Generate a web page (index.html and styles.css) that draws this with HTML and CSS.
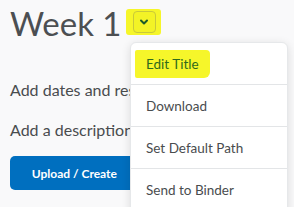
FILE: index.html
```html
<!DOCTYPE html>
<html lang="en">
  <head>
    <meta charset="UTF-8" />
    <title>Week 1</title>
    <link rel="stylesheet" href="styles.css">
  </head>
  <body>
    <div class="unit-page">
      <div class="title-row">
        <h1 class="unit-title">Week 1</h1>
        <span class="marker marker-trigger">
          <button class="context-trigger" aria-label="Actions">
            <svg width="10" height="8" viewBox="0 0 10 8">
              <polyline points="2,2.5 5,5.5 8,2.5" fill="none" stroke="#1c5a2a" stroke-width="2" stroke-linecap="round" stroke-linejoin="round" />
            </svg>
          </button>
        </span>
      </div>

      <p class="add-line">Add dates and restrictions...</p>
      <p class="add-line">Add a description...</p>

      <div class="actions">
        <button class="btn btn-primary">Upload / Create</button>
        <button class="btn btn-secondary">Existing Activities</button>
      </div>

      <ul class="context-menu">
        <li class="menu-item"><span class="marker marker-item">Edit Title</span></li>
        <li class="menu-item">Download</li>
        <li class="menu-item">Set Default Path</li>
        <li class="menu-item">Send to Binder</li>
      </ul>
    </div>
  </body>
</html>
```

FILE: styles.css
```css
* {
  margin: 0;
  padding: 0;
  box-sizing: border-box;
}

body {
  font-family: "Lato", "Liberation Sans", sans-serif;
  background: #f9f9fa;
  color: #494c4e;
  overflow: hidden;
}

.unit-page {
  position: relative;
  padding: 0 10px;
  height: 207px;
}

.title-row {
  display: flex;
  align-items: center;
  height: 45px;
  gap: 4px;
}

.unit-title {
  font-size: 33px;
  font-weight: 400;
  line-height: 1;
  color: #4c4f52;
  margin-top: 1px;
}

.marker {
  background: #f6f62a;
  border-radius: 3px;
}

.marker-trigger {
  display: flex;
  align-items: center;
  padding: 2px 5px 2px 7px;
  margin-top: -2px;
}

.context-trigger {
  display: flex;
  align-items: center;
  justify-content: center;
  width: 23px;
  height: 22px;
  border: 1px solid #c9c93a;
  border-radius: 4px;
  background: #f3f326;
}

.add-line {
  font-size: 16px;
  line-height: 20px;
  white-space: nowrap;
}

.add-line:first-of-type {
  margin-top: 35px;
}

.add-line + .add-line {
  margin-top: 20px;
}

.actions {
  display: flex;
  gap: 8px;
  margin-top: 16px;
}

.btn {
  font-family: inherit;
  font-size: 12px;
  font-weight: 700;
  height: 34px;
  border-radius: 5px;
  white-space: nowrap;
}

.btn-primary {
  width: 137px;
  background: #006fbf;
  border: none;
  color: #fff;
}

.btn-secondary {
  padding: 0 20px;
  background: #f1f3f6;
  border: 1px solid #d3d9e3;
  color: #494c4e;
}

.context-menu {
  position: absolute;
  top: 42px;
  left: 130px;
  width: 158px;
  height: 180px;
  list-style: none;
  background: #fff;
  border: 1px solid #e6e8ea;
  border-radius: 6px;
  box-shadow: 0 2px 10px rgba(0, 0, 0, 0.12);
}

.menu-item {
  display: flex;
  align-items: center;
  height: 42px;
  padding-left: 15px;
  font-size: 13.5px;
  border-bottom: 1px solid #e3e5e7;
}

.menu-item:first-child {
  padding-left: 4px;
}

.marker-item {
  padding: 6px 11px;
  color: #2f6a1c;
  border-radius: 2px 4px 6px 2px;
}
```
